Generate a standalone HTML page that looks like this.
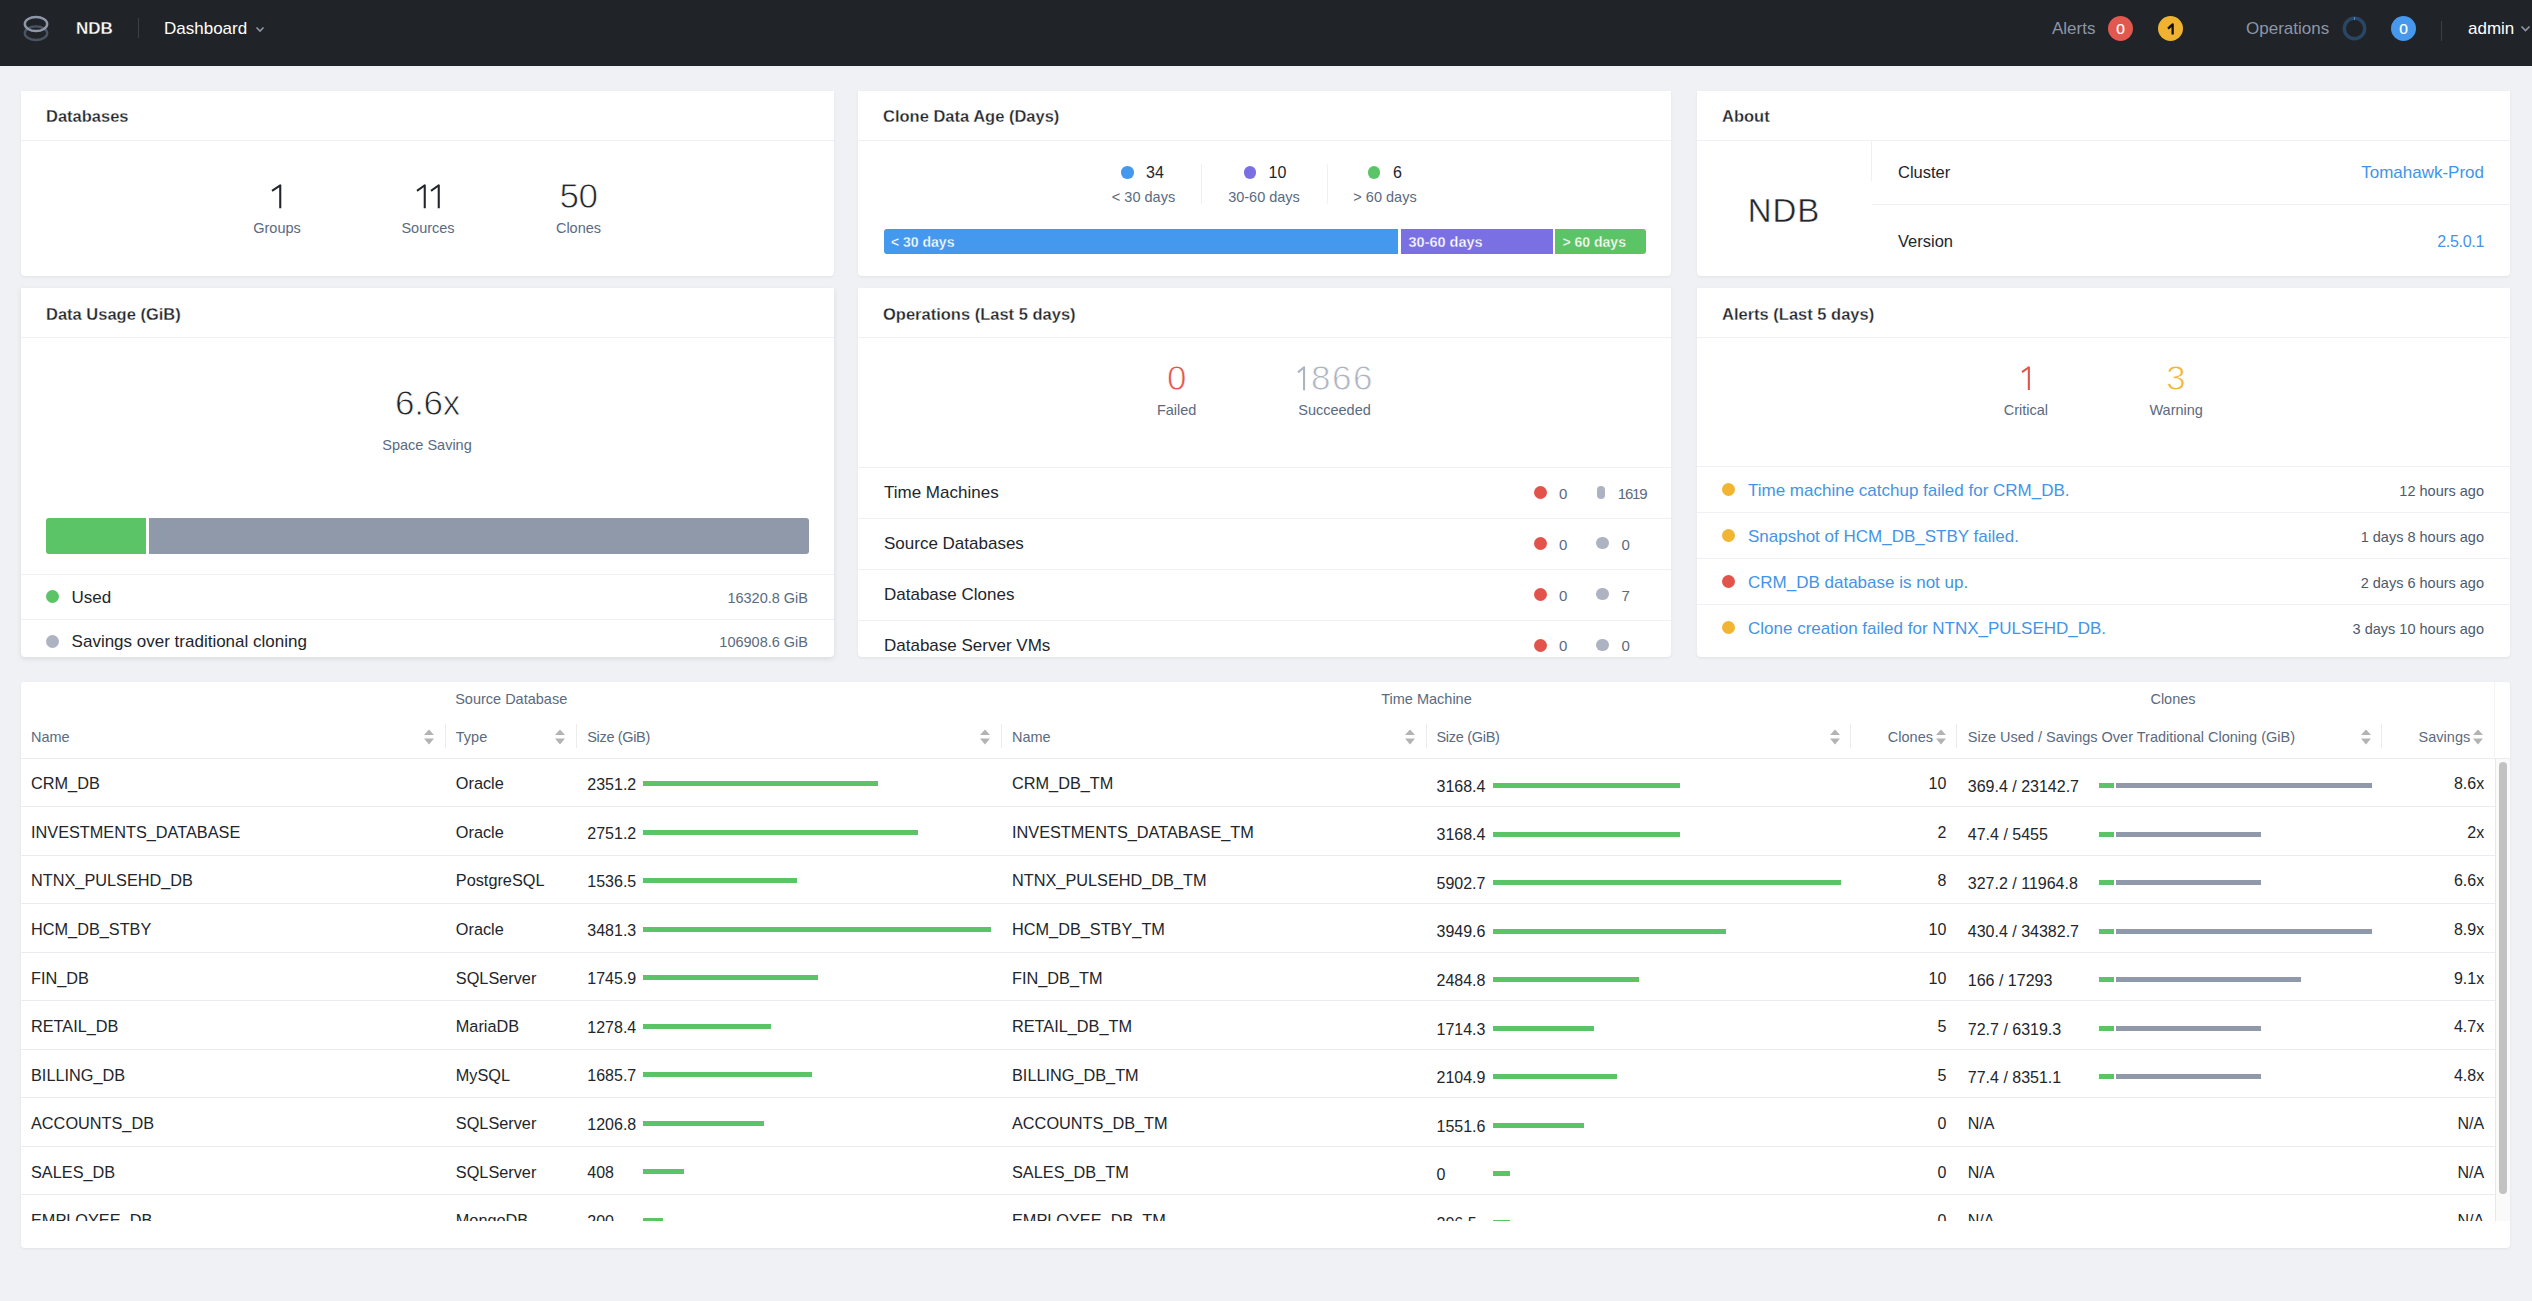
<!DOCTYPE html>
<html><head><meta charset="utf-8"><title>NDB Dashboard</title>
<style>
html,body{margin:0;padding:0;}
body{width:2532px;height:1301px;overflow:hidden;position:relative;background:#f0f1f4;font-family:"Liberation Sans",sans-serif;}
.t{position:absolute;white-space:nowrap;line-height:0;}
.r{position:absolute;}
.card{position:absolute;background:#ffffff;border-radius:0 0 4px 4px;box-shadow:0 1px 3px rgba(30,40,60,0.07);}
.clip{position:absolute;overflow:hidden;}
</style></head><body>
<div class="r" style="left:0px;top:0px;width:2532px;height:66px;background:#202328;"></div>
<svg class="r" style="left:18px;top:10px" width="40" height="38" viewBox="0 0 40 38">
<ellipse cx="18" cy="23.2" rx="11.2" ry="6.8" fill="none" stroke="#4a5361" stroke-width="2.4"/>
<ellipse cx="18" cy="14" rx="11.2" ry="7" fill="none" stroke="#8f98a8" stroke-width="2.4"/>
</svg>
<div class="t" style="top:29.00px;font-size:17px;color:#ffffff;font-weight:700;left:76.00px;-webkit-text-stroke:0.3px #202328;">NDB</div>
<div class="r" style="left:137.5px;top:18px;width:1.5px;height:20px;background:#3b4048;"></div>
<div class="t" style="top:29.00px;font-size:17px;color:#ffffff;left:164.00px;">Dashboard</div>
<svg class="r" style="left:254px;top:25px" width="12" height="9" viewBox="0 0 12 9"><path d="M2.5 2.5 L6 6 L9.5 2.5" fill="none" stroke="#8f98a8" stroke-width="1.6"/></svg>
<div class="t" style="top:29.00px;font-size:17px;color:#8d96a6;left:2052.00px;">Alerts</div>
<div class="r" style="left:2108.00px;top:16.00px;width:25px;height:25px;background:#e2584e;border-radius:50%;"></div>
<div class="t" style="top:29.00px;font-size:15.5px;color:#ffffff;left:2120.50px;transform:translateX(-50%);-webkit-text-stroke:0.2px #fff;">0</div>
<div class="r" style="left:2158.00px;top:16.00px;width:25px;height:25px;background:#f0b331;border-radius:50%;"></div>
<svg class="r" style="left:2165.60px;top:20.60px" width="9.8" height="14.4"><path d="M2.00 7.60 L6.65 3.38 L6.65 13.40" fill="none" stroke="#111111" stroke-width="2.3" stroke-linejoin="round"/></svg>
<div class="t" style="top:29.00px;font-size:17px;color:#8d96a6;left:2246.00px;">Operations</div>
<svg class="r" style="left:2342px;top:15.5px" width="25" height="25" viewBox="0 0 25 25"><circle cx="12.5" cy="12.5" r="10.2" fill="none" stroke="#2a4665" stroke-width="3.4"/><path d="M12.5 1 L12.5 4" stroke="#4d8fd6" stroke-width="1"/></svg>
<div class="r" style="left:2391.00px;top:16.00px;width:25px;height:25px;background:#4598ec;border-radius:50%;"></div>
<div class="t" style="top:29.00px;font-size:15.5px;color:#ffffff;left:2403.50px;transform:translateX(-50%);-webkit-text-stroke:0.2px #fff;">0</div>
<div class="r" style="left:2441px;top:21px;width:1px;height:20px;background:#3b4048;"></div>
<div class="t" style="top:29.00px;font-size:17px;color:#ffffff;left:2468.00px;">admin</div>
<svg class="r" style="left:2519px;top:24px" width="13" height="9" viewBox="0 0 13 9"><path d="M2.5 2.5 L6.5 6.5 L10.5 2.5" fill="none" stroke="#8f98a8" stroke-width="1.6"/></svg>
<div class="card" style="left:21px;top:91px;width:813px;height:185px;"></div>
<div class="t" style="top:116.00px;font-size:16.5px;color:#22262b;font-weight:700;left:46.00px;-webkit-text-stroke:0.28px #fff;">Databases</div>
<div class="r" style="left:21px;top:140px;width:813px;height:1px;background:#eef0f3;"></div>
<div class="t" style="top:228.00px;font-size:14.5px;color:#5a6a80;left:277.00px;transform:translateX(-50%);">Groups</div>
<div class="t" style="top:228.00px;font-size:14.5px;color:#5a6a80;left:428.00px;transform:translateX(-50%);">Sources</div>
<div class="t" style="top:196.00px;font-size:35px;color:#22262b;left:578.50px;transform:translateX(-50%);letter-spacing:-0.5px;-webkit-text-stroke:0.8px #fff;">50</div>
<div class="t" style="top:228.00px;font-size:14.5px;color:#5a6a80;left:578.50px;transform:translateX(-50%);">Clones</div>
<svg class="r" style="left:270.00px;top:182.00px" width="13.3" height="27.2"><path d="M2.00 8.80 L10.25 3.26 L10.25 26.20" fill="none" stroke="#22262b" stroke-width="2.1" stroke-linejoin="round"/></svg>
<svg class="r" style="left:415.20px;top:182.00px" width="12.8" height="27.2"><path d="M2.00 8.80 L9.75 3.26 L9.75 26.20" fill="none" stroke="#22262b" stroke-width="2.1" stroke-linejoin="round"/></svg>
<svg class="r" style="left:428.50px;top:182.00px" width="12.8" height="27.2"><path d="M2.00 8.80 L9.75 3.26 L9.75 26.20" fill="none" stroke="#22262b" stroke-width="2.1" stroke-linejoin="round"/></svg>
<div class="card" style="left:858px;top:91px;width:813px;height:185px;"></div>
<div class="t" style="top:116.00px;font-size:16.5px;color:#22262b;font-weight:700;left:883.00px;-webkit-text-stroke:0.28px #fff;">Clone Data Age (Days)</div>
<div class="r" style="left:858px;top:140px;width:813px;height:1px;background:#eef0f3;"></div>
<div class="r" style="left:1121.25px;top:166.25px;width:12.5px;height:12.5px;background:#4498ee;border-radius:50%;"></div>
<div class="t" style="top:173.00px;font-size:16px;color:#22262b;left:1146.00px;">34</div>
<div class="t" style="top:197.00px;font-size:14.5px;color:#5a6a80;left:1143.50px;transform:translateX(-50%);">&lt; 30 days</div>
<div class="r" style="left:1243.75px;top:166.25px;width:12.5px;height:12.5px;background:#7a6fe3;border-radius:50%;"></div>
<div class="t" style="top:173.00px;font-size:16px;color:#22262b;left:1268.50px;">10</div>
<div class="t" style="top:197.00px;font-size:14.5px;color:#5a6a80;left:1264.00px;transform:translateX(-50%);">30-60 days</div>
<div class="r" style="left:1367.75px;top:166.25px;width:12.5px;height:12.5px;background:#5bc466;border-radius:50%;"></div>
<div class="t" style="top:173.00px;font-size:16px;color:#22262b;left:1393.00px;">6</div>
<div class="t" style="top:197.00px;font-size:14.5px;color:#5a6a80;left:1385.00px;transform:translateX(-50%);">&gt; 60 days</div>
<div class="r" style="left:1201px;top:164px;width:1px;height:40px;background:#eef0f3;"></div>
<div class="r" style="left:1327px;top:164px;width:1px;height:40px;background:#eef0f3;"></div>
<div class="r" style="left:883.8px;top:229px;width:514.6px;height:25px;background:#4498ee;border-radius:3px 0 0 3px;"></div>
<div class="r" style="left:1400.6px;top:229px;width:152px;height:25px;background:#7a6fe3;"></div>
<div class="r" style="left:1555.3px;top:229px;width:90.9px;height:25px;background:#5bc466;border-radius:0 3px 3px 0;"></div>
<div class="t" style="top:242.00px;font-size:14px;color:#ffffff;font-weight:700;left:891.00px;-webkit-text-stroke:0.3px #4498ee;">&lt; 30 days</div>
<div class="t" style="top:242.00px;font-size:14.5px;color:#ffffff;font-weight:700;left:1408.50px;-webkit-text-stroke:0.3px #7a6fe3;">30-60 days</div>
<div class="t" style="top:242.00px;font-size:14px;color:#ffffff;font-weight:700;left:1562.50px;-webkit-text-stroke:0.3px #5bc466;">&gt; 60 days</div>
<div class="card" style="left:1697px;top:91px;width:813px;height:185px;"></div>
<div class="t" style="top:116.00px;font-size:16.5px;color:#22262b;font-weight:700;left:1722.00px;-webkit-text-stroke:0.28px #fff;">About</div>
<div class="r" style="left:1697px;top:140px;width:813px;height:1px;background:#eef0f3;"></div>
<div class="t" style="top:211.00px;font-size:33px;color:#22262b;left:1784.00px;transform:translateX(-50%);letter-spacing:1px;-webkit-text-stroke:0.45px #fff;">NDB</div>
<div class="r" style="left:1871px;top:141px;width:1px;height:40px;background:#eef0f3;"></div>
<div class="r" style="left:1872px;top:204px;width:638px;height:1px;background:#eef0f3;"></div>
<div class="t" style="top:172.00px;font-size:16.5px;color:#22262b;left:1898.00px;">Cluster</div>
<div class="t" style="top:173.00px;font-size:17px;color:#4394e8;right:48.00px;">Tomahawk-Prod</div>
<div class="t" style="top:241.00px;font-size:16.5px;color:#22262b;left:1898.00px;">Version</div>
<div class="t" style="top:242.00px;font-size:16px;color:#4394e8;right:48.00px;letter-spacing:-0.3px;">2.5.0.1</div>
<div class="card" style="left:21px;top:288px;width:813px;height:369px;box-shadow:0 2px 5px rgba(30,40,60,0.10);"></div>
<div class="t" style="top:314.00px;font-size:16.5px;color:#22262b;font-weight:700;left:46.00px;-webkit-text-stroke:0.28px #fff;">Data Usage (GiB)</div>
<div class="r" style="left:21px;top:337px;width:813px;height:1px;background:#eef0f3;"></div>
<div class="t" style="top:403.00px;font-size:35px;color:#22262b;left:427.50px;transform:translateX(-50%);letter-spacing:-0.3px;-webkit-text-stroke:0.8px #fff;">6.6x</div>
<div class="t" style="top:445.00px;font-size:14.5px;color:#5a6a80;left:427.00px;transform:translateX(-50%);">Space Saving</div>
<div class="r" style="left:46px;top:518px;width:100px;height:36px;background:#5bc466;border-radius:3px 0 0 3px;"></div>
<div class="r" style="left:149px;top:518px;width:660px;height:36px;background:#8f99aa;border-radius:0 3px 3px 0;"></div>
<div class="r" style="left:21px;top:574px;width:813px;height:1px;background:#eef0f3;"></div>
<div class="r" style="left:46.00px;top:589.80px;width:13px;height:13px;background:#5bc466;border-radius:50%;"></div>
<div class="t" style="top:598.00px;font-size:17px;color:#22262b;left:71.60px;">Used</div>
<div class="t" style="top:598.00px;font-size:14.5px;color:#5a6a80;right:1724.00px;">16320.8 GiB</div>
<div class="r" style="left:21px;top:619px;width:813px;height:1px;background:#eef0f3;"></div>
<div class="r" style="left:46.00px;top:634.50px;width:13px;height:13px;background:#adb3c0;border-radius:50%;"></div>
<div class="t" style="top:642.00px;font-size:17px;color:#22262b;left:71.60px;">Savings over traditional cloning</div>
<div class="t" style="top:642.00px;font-size:14.5px;color:#5a6a80;right:1724.00px;">106908.6 GiB</div>
<div class="card" style="left:858px;top:288px;width:813px;height:369px;"></div>
<div class="t" style="top:314.00px;font-size:16.5px;color:#22262b;font-weight:700;left:883.00px;-webkit-text-stroke:0.28px #fff;">Operations (Last 5 days)</div>
<div class="r" style="left:858px;top:337px;width:813px;height:1px;background:#eef0f3;"></div>
<div class="t" style="top:378.00px;font-size:35px;color:#e2544b;left:1176.70px;transform:translateX(-50%);-webkit-text-stroke:0.8px #fff;">0</div>
<svg class="r" style="left:1296.30px;top:364.00px" width="11.1" height="27.3"><path d="M2.00 8.40 L8.05 3.26 L8.05 26.30" fill="none" stroke="#acb4c1" stroke-width="2.1" stroke-linejoin="round"/></svg>
<div class="t" style="top:378.00px;font-size:35px;color:#acb4c1;left:1311.00px;letter-spacing:1.5px;-webkit-text-stroke:0.8px #fff;">866</div>
<div class="t" style="top:410.00px;font-size:14.5px;color:#5a6a80;left:1176.70px;transform:translateX(-50%);">Failed</div>
<div class="t" style="top:410.00px;font-size:14.5px;color:#5a6a80;left:1334.50px;transform:translateX(-50%);">Succeeded</div>
<div class="r" style="left:858px;top:467px;width:813px;height:1px;background:#eef0f3;"></div>
<div class="t" style="top:493.00px;font-size:17px;color:#22262b;left:884.00px;">Time Machines</div>
<div class="r" style="left:1533.50px;top:485.50px;width:13px;height:13px;background:#e2544b;border-radius:50%;"></div>
<div class="t" style="top:494.00px;font-size:15px;color:#5a6a80;left:1559.00px;">0</div>
<div class="r" style="left:1596.5px;top:485.5px;width:8.5px;height:13px;background:#adb3c0;border-radius:4.5px;"></div>
<div class="t" style="top:494.00px;font-size:15px;color:#5a6a80;left:1617.80px;letter-spacing:-1.2px;">1619</div>
<div class="r" style="left:858px;top:518px;width:813px;height:1px;background:#eef0f3;"></div>
<div class="t" style="top:544.00px;font-size:17px;color:#22262b;left:884.00px;">Source Databases</div>
<div class="r" style="left:1533.50px;top:536.50px;width:13px;height:13px;background:#e2544b;border-radius:50%;"></div>
<div class="t" style="top:545.00px;font-size:15px;color:#5a6a80;left:1559.00px;">0</div>
<div class="r" style="left:1596.25px;top:536.75px;width:12.5px;height:12.5px;background:#adb3c0;border-radius:50%;"></div>
<div class="t" style="top:545.00px;font-size:15px;color:#5a6a80;left:1621.40px;">0</div>
<div class="r" style="left:858px;top:569px;width:813px;height:1px;background:#eef0f3;"></div>
<div class="t" style="top:595.00px;font-size:17px;color:#22262b;left:884.00px;">Database Clones</div>
<div class="r" style="left:1533.50px;top:587.50px;width:13px;height:13px;background:#e2544b;border-radius:50%;"></div>
<div class="t" style="top:596.00px;font-size:15px;color:#5a6a80;left:1559.00px;">0</div>
<div class="r" style="left:1596.25px;top:587.75px;width:12.5px;height:12.5px;background:#adb3c0;border-radius:50%;"></div>
<div class="t" style="top:596.00px;font-size:15px;color:#5a6a80;left:1621.40px;">7</div>
<div class="r" style="left:858px;top:620px;width:813px;height:1px;background:#eef0f3;"></div>
<div class="t" style="top:646.00px;font-size:17px;color:#22262b;left:884.00px;">Database Server VMs</div>
<div class="r" style="left:1533.50px;top:638.50px;width:13px;height:13px;background:#e2544b;border-radius:50%;"></div>
<div class="t" style="top:646.00px;font-size:15px;color:#5a6a80;left:1559.00px;">0</div>
<div class="r" style="left:1596.25px;top:638.75px;width:12.5px;height:12.5px;background:#adb3c0;border-radius:50%;"></div>
<div class="t" style="top:646.00px;font-size:15px;color:#5a6a80;left:1621.40px;">0</div>
<div class="card" style="left:1697px;top:288px;width:813px;height:369px;"></div>
<div class="t" style="top:314.00px;font-size:16.5px;color:#22262b;font-weight:700;left:1722.00px;-webkit-text-stroke:0.28px #fff;">Alerts (Last 5 days)</div>
<div class="r" style="left:1697px;top:337px;width:813px;height:1px;background:#eef0f3;"></div>
<svg class="r" style="left:2019.50px;top:364.00px" width="11.9" height="27.0"><path d="M2.00 8.20 L8.85 3.26 L8.85 26.00" fill="none" stroke="#e2544b" stroke-width="2.1" stroke-linejoin="round"/></svg>
<div class="t" style="top:378.00px;font-size:35px;color:#f2b531;left:2176.00px;transform:translateX(-50%);-webkit-text-stroke:0.8px #fff;">3</div>
<div class="t" style="top:410.00px;font-size:14.5px;color:#5a6a80;left:2025.90px;transform:translateX(-50%);">Critical</div>
<div class="t" style="top:410.00px;font-size:14.5px;color:#5a6a80;left:2176.20px;transform:translateX(-50%);">Warning</div>
<div class="r" style="left:1697px;top:466px;width:813px;height:1px;background:#eef0f3;"></div>
<div class="r" style="left:1722.20px;top:483.00px;width:13px;height:13px;background:#f2b531;border-radius:50%;"></div>
<div class="t" style="top:491.00px;font-size:17px;color:#4394e8;left:1748.00px;">Time machine catchup failed for CRM_DB.</div>
<div class="t" style="top:491.00px;font-size:14.5px;color:#4e5a6c;right:48.00px;">12 hours ago</div>
<div class="r" style="left:1697px;top:512px;width:813px;height:1px;background:#eef0f3;"></div>
<div class="r" style="left:1722.20px;top:529.00px;width:13px;height:13px;background:#f2b531;border-radius:50%;"></div>
<div class="t" style="top:537.00px;font-size:17px;color:#4394e8;left:1748.00px;">Snapshot of HCM_DB_STBY failed.</div>
<div class="t" style="top:537.00px;font-size:14.5px;color:#4e5a6c;right:48.00px;">1 days 8 hours ago</div>
<div class="r" style="left:1697px;top:558px;width:813px;height:1px;background:#eef0f3;"></div>
<div class="r" style="left:1722.20px;top:575.00px;width:13px;height:13px;background:#e2544b;border-radius:50%;"></div>
<div class="t" style="top:583.00px;font-size:17px;color:#4394e8;left:1748.00px;">CRM_DB database is not up.</div>
<div class="t" style="top:583.00px;font-size:14.5px;color:#4e5a6c;right:48.00px;">2 days 6 hours ago</div>
<div class="r" style="left:1697px;top:604px;width:813px;height:1px;background:#eef0f3;"></div>
<div class="r" style="left:1722.20px;top:621.00px;width:13px;height:13px;background:#f2b531;border-radius:50%;"></div>
<div class="t" style="top:629.00px;font-size:17px;color:#4394e8;left:1748.00px;">Clone creation failed for NTNX_PULSEHD_DB.</div>
<div class="t" style="top:629.00px;font-size:14.5px;color:#4e5a6c;right:48.00px;">3 days 10 hours ago</div>
<div class="card" style="left:21px;top:682px;width:2489px;height:566px;border-radius:3px 3px 4px 4px;"></div>
<div class="t" style="top:699.00px;font-size:14.5px;color:#5a6a80;left:511.20px;transform:translateX(-50%);">Source Database</div>
<div class="t" style="top:699.00px;font-size:14.5px;color:#5a6a80;left:1426.50px;transform:translateX(-50%);">Time Machine</div>
<div class="t" style="top:699.00px;font-size:14.5px;color:#5a6a80;left:2173.00px;transform:translateX(-50%);">Clones</div>
<div class="r" style="left:445.1px;top:724px;width:1px;height:24px;background:#ececec;"></div>
<div class="r" style="left:575.6px;top:724px;width:1px;height:24px;background:#ececec;"></div>
<div class="r" style="left:1001.0px;top:724px;width:1px;height:24px;background:#ececec;"></div>
<div class="r" style="left:1425.6px;top:724px;width:1px;height:24px;background:#ececec;"></div>
<div class="r" style="left:1850.1px;top:724px;width:1px;height:24px;background:#ececec;"></div>
<div class="r" style="left:1956.2px;top:724px;width:1px;height:24px;background:#ececec;"></div>
<div class="r" style="left:2381.0px;top:724px;width:1px;height:24px;background:#ececec;"></div>
<div class="t" style="top:737.00px;font-size:14.5px;color:#5a6a80;left:31.00px;">Name</div>
<svg class="r" style="left:424.0px;top:728.5px" width="10" height="16" viewBox="0 0 10 16"><path d="M5 0.5 L10 6 L0 6 Z M0 9.5 L10 9.5 L5 15.5 Z" fill="#b3b3b3"/></svg>
<div class="t" style="top:737.00px;font-size:14.5px;color:#5a6a80;left:455.80px;">Type</div>
<svg class="r" style="left:554.8px;top:728.5px" width="10" height="16" viewBox="0 0 10 16"><path d="M5 0.5 L10 6 L0 6 Z M0 9.5 L10 9.5 L5 15.5 Z" fill="#b3b3b3"/></svg>
<div class="t" style="top:737.00px;font-size:14.5px;color:#5a6a80;left:587.30px;letter-spacing:-0.35px;">Size (GiB)</div>
<svg class="r" style="left:980.0px;top:728.5px" width="10" height="16" viewBox="0 0 10 16"><path d="M5 0.5 L10 6 L0 6 Z M0 9.5 L10 9.5 L5 15.5 Z" fill="#b3b3b3"/></svg>
<div class="t" style="top:737.00px;font-size:14.5px;color:#5a6a80;left:1012.00px;">Name</div>
<svg class="r" style="left:1405.3px;top:728.5px" width="10" height="16" viewBox="0 0 10 16"><path d="M5 0.5 L10 6 L0 6 Z M0 9.5 L10 9.5 L5 15.5 Z" fill="#b3b3b3"/></svg>
<div class="t" style="top:737.00px;font-size:14.5px;color:#5a6a80;left:1436.50px;letter-spacing:-0.3px;">Size (GiB)</div>
<svg class="r" style="left:1829.5px;top:728.5px" width="10" height="16" viewBox="0 0 10 16"><path d="M5 0.5 L10 6 L0 6 Z M0 9.5 L10 9.5 L5 15.5 Z" fill="#b3b3b3"/></svg>
<div class="t" style="top:737.00px;font-size:14.5px;color:#5a6a80;right:599.00px;">Clones</div>
<svg class="r" style="left:1936.2px;top:728.5px" width="10" height="16" viewBox="0 0 10 16"><path d="M5 0.5 L10 6 L0 6 Z M0 9.5 L10 9.5 L5 15.5 Z" fill="#b3b3b3"/></svg>
<div class="t" style="top:737.00px;font-size:14.5px;color:#5a6a80;left:1967.80px;">Size Used / Savings Over Traditional Cloning (GiB)</div>
<svg class="r" style="left:2360.7px;top:728.5px" width="10" height="16" viewBox="0 0 10 16"><path d="M5 0.5 L10 6 L0 6 Z M0 9.5 L10 9.5 L5 15.5 Z" fill="#b3b3b3"/></svg>
<div class="t" style="top:737.00px;font-size:14.5px;color:#5a6a80;right:61.80px;">Savings</div>
<svg class="r" style="left:2473.2px;top:728.5px" width="10" height="16" viewBox="0 0 10 16"><path d="M5 0.5 L10 6 L0 6 Z M0 9.5 L10 9.5 L5 15.5 Z" fill="#b3b3b3"/></svg>
<div class="r" style="left:21px;top:758px;width:2489px;height:1px;background:#eaecef;"></div>
<div class="r" style="left:2494px;top:682px;width:1px;height:76px;background:#f3f3f3;"></div>
<div class="clip" style="left:21px;top:759px;width:2474px;height:462px;">
<div class="t" style="top:24.00px;font-size:16.3px;color:#22262b;left:10.00px;">CRM_DB</div>
<div class="t" style="top:24.00px;font-size:16.3px;color:#22262b;left:434.80px;">Oracle</div>
<div class="t" style="top:26.00px;font-size:16px;color:#22262b;left:566.30px;">2351.2</div>
<div class="r" style="left:622.00px;top:22.00px;width:235px;height:5px;background:#5bc466;"></div>
<div class="t" style="top:24.00px;font-size:16.3px;color:#22262b;left:991.00px;">CRM_DB_TM</div>
<div class="t" style="top:28.00px;font-size:16px;color:#22262b;left:1415.50px;">3168.4</div>
<div class="r" style="left:1472.00px;top:24.00px;width:187px;height:5px;background:#5bc466;"></div>
<div class="t" style="top:25.00px;font-size:16px;color:#22262b;right:548.70px;">10</div>
<div class="t" style="top:28.00px;font-size:16px;color:#22262b;left:1946.80px;">369.4 / 23142.7</div>
<div class="r" style="left:2078.00px;top:24.00px;width:15px;height:5px;background:#5bc466;"></div>
<div class="r" style="left:2095.00px;top:24.00px;width:256px;height:5px;background:#8f99aa;"></div>
<div class="t" style="top:25.00px;font-size:16px;color:#22262b;right:10.80px;">8.6x</div>
<div class="r" style="left:0.00px;top:47.00px;width:2474px;height:1px;background:#eaecef;"></div>
<div class="t" style="top:73.00px;font-size:16.3px;color:#22262b;left:10.00px;">INVESTMENTS_DATABASE</div>
<div class="t" style="top:73.00px;font-size:16.3px;color:#22262b;left:434.80px;">Oracle</div>
<div class="t" style="top:75.00px;font-size:16px;color:#22262b;left:566.30px;">2751.2</div>
<div class="r" style="left:622.00px;top:70.53px;width:275px;height:5px;background:#5bc466;"></div>
<div class="t" style="top:73.00px;font-size:16.3px;color:#22262b;left:991.00px;">INVESTMENTS_DATABASE_TM</div>
<div class="t" style="top:76.00px;font-size:16px;color:#22262b;left:1415.50px;">3168.4</div>
<div class="r" style="left:1472.00px;top:72.53px;width:187px;height:5px;background:#5bc466;"></div>
<div class="t" style="top:74.00px;font-size:16px;color:#22262b;right:548.70px;">2</div>
<div class="t" style="top:76.00px;font-size:16px;color:#22262b;left:1946.80px;">47.4 / 5455</div>
<div class="r" style="left:2078.00px;top:72.53px;width:15px;height:5px;background:#5bc466;"></div>
<div class="r" style="left:2095.00px;top:72.53px;width:145px;height:5px;background:#8f99aa;"></div>
<div class="t" style="top:74.00px;font-size:16px;color:#22262b;right:10.80px;">2x</div>
<div class="r" style="left:0.00px;top:95.53px;width:2474px;height:1px;background:#eaecef;"></div>
<div class="t" style="top:121.00px;font-size:16.3px;color:#22262b;left:10.00px;">NTNX_PULSEHD_DB</div>
<div class="t" style="top:121.00px;font-size:16.3px;color:#22262b;left:434.80px;">PostgreSQL</div>
<div class="t" style="top:123.00px;font-size:16px;color:#22262b;left:566.30px;">1536.5</div>
<div class="r" style="left:622.00px;top:119.06px;width:154px;height:5px;background:#5bc466;"></div>
<div class="t" style="top:121.00px;font-size:16.3px;color:#22262b;left:991.00px;">NTNX_PULSEHD_DB_TM</div>
<div class="t" style="top:125.00px;font-size:16px;color:#22262b;left:1415.50px;">5902.7</div>
<div class="r" style="left:1472.00px;top:121.06px;width:348px;height:5px;background:#5bc466;"></div>
<div class="t" style="top:122.00px;font-size:16px;color:#22262b;right:548.70px;">8</div>
<div class="t" style="top:125.00px;font-size:16px;color:#22262b;left:1946.80px;">327.2 / 11964.8</div>
<div class="r" style="left:2078.00px;top:121.06px;width:15px;height:5px;background:#5bc466;"></div>
<div class="r" style="left:2095.00px;top:121.06px;width:145px;height:5px;background:#8f99aa;"></div>
<div class="t" style="top:122.00px;font-size:16px;color:#22262b;right:10.80px;">6.6x</div>
<div class="r" style="left:0.00px;top:144.06px;width:2474px;height:1px;background:#eaecef;"></div>
<div class="t" style="top:170.00px;font-size:16.3px;color:#22262b;left:10.00px;">HCM_DB_STBY</div>
<div class="t" style="top:170.00px;font-size:16.3px;color:#22262b;left:434.80px;">Oracle</div>
<div class="t" style="top:172.00px;font-size:16px;color:#22262b;left:566.30px;">3481.3</div>
<div class="r" style="left:622.00px;top:167.59px;width:348px;height:5px;background:#5bc466;"></div>
<div class="t" style="top:170.00px;font-size:16.3px;color:#22262b;left:991.00px;">HCM_DB_STBY_TM</div>
<div class="t" style="top:173.00px;font-size:16px;color:#22262b;left:1415.50px;">3949.6</div>
<div class="r" style="left:1472.00px;top:169.59px;width:233px;height:5px;background:#5bc466;"></div>
<div class="t" style="top:171.00px;font-size:16px;color:#22262b;right:548.70px;">10</div>
<div class="t" style="top:173.00px;font-size:16px;color:#22262b;left:1946.80px;">430.4 / 34382.7</div>
<div class="r" style="left:2078.00px;top:169.59px;width:15px;height:5px;background:#5bc466;"></div>
<div class="r" style="left:2095.00px;top:169.59px;width:256px;height:5px;background:#8f99aa;"></div>
<div class="t" style="top:171.00px;font-size:16px;color:#22262b;right:10.80px;">8.9x</div>
<div class="r" style="left:0.00px;top:192.59px;width:2474px;height:1px;background:#eaecef;"></div>
<div class="t" style="top:219.00px;font-size:16.3px;color:#22262b;left:10.00px;">FIN_DB</div>
<div class="t" style="top:219.00px;font-size:16.3px;color:#22262b;left:434.80px;">SQLServer</div>
<div class="t" style="top:220.00px;font-size:16px;color:#22262b;left:566.30px;">1745.9</div>
<div class="r" style="left:622.00px;top:216.12px;width:175px;height:5px;background:#5bc466;"></div>
<div class="t" style="top:219.00px;font-size:16.3px;color:#22262b;left:991.00px;">FIN_DB_TM</div>
<div class="t" style="top:222.00px;font-size:16px;color:#22262b;left:1415.50px;">2484.8</div>
<div class="r" style="left:1472.00px;top:218.12px;width:146px;height:5px;background:#5bc466;"></div>
<div class="t" style="top:220.00px;font-size:16px;color:#22262b;right:548.70px;">10</div>
<div class="t" style="top:222.00px;font-size:16px;color:#22262b;left:1946.80px;">166 / 17293</div>
<div class="r" style="left:2078.00px;top:218.12px;width:15px;height:5px;background:#5bc466;"></div>
<div class="r" style="left:2095.00px;top:218.12px;width:185px;height:5px;background:#8f99aa;"></div>
<div class="t" style="top:220.00px;font-size:16px;color:#22262b;right:10.80px;">9.1x</div>
<div class="r" style="left:0.00px;top:241.12px;width:2474px;height:1px;background:#eaecef;"></div>
<div class="t" style="top:267.00px;font-size:16.3px;color:#22262b;left:10.00px;">RETAIL_DB</div>
<div class="t" style="top:267.00px;font-size:16.3px;color:#22262b;left:434.80px;">MariaDB</div>
<div class="t" style="top:269.00px;font-size:16px;color:#22262b;left:566.30px;">1278.4</div>
<div class="r" style="left:622.00px;top:264.65px;width:128px;height:5px;background:#5bc466;"></div>
<div class="t" style="top:267.00px;font-size:16.3px;color:#22262b;left:991.00px;">RETAIL_DB_TM</div>
<div class="t" style="top:271.00px;font-size:16px;color:#22262b;left:1415.50px;">1714.3</div>
<div class="r" style="left:1472.00px;top:266.65px;width:101px;height:5px;background:#5bc466;"></div>
<div class="t" style="top:268.00px;font-size:16px;color:#22262b;right:548.70px;">5</div>
<div class="t" style="top:271.00px;font-size:16px;color:#22262b;left:1946.80px;">72.7 / 6319.3</div>
<div class="r" style="left:2078.00px;top:266.65px;width:15px;height:5px;background:#5bc466;"></div>
<div class="r" style="left:2095.00px;top:266.65px;width:145px;height:5px;background:#8f99aa;"></div>
<div class="t" style="top:268.00px;font-size:16px;color:#22262b;right:10.80px;">4.7x</div>
<div class="r" style="left:0.00px;top:289.65px;width:2474px;height:1px;background:#eaecef;"></div>
<div class="t" style="top:316.00px;font-size:16.3px;color:#22262b;left:10.00px;">BILLING_DB</div>
<div class="t" style="top:316.00px;font-size:16.3px;color:#22262b;left:434.80px;">MySQL</div>
<div class="t" style="top:317.00px;font-size:16px;color:#22262b;left:566.30px;">1685.7</div>
<div class="r" style="left:622.00px;top:313.18px;width:169px;height:5px;background:#5bc466;"></div>
<div class="t" style="top:316.00px;font-size:16.3px;color:#22262b;left:991.00px;">BILLING_DB_TM</div>
<div class="t" style="top:319.00px;font-size:16px;color:#22262b;left:1415.50px;">2104.9</div>
<div class="r" style="left:1472.00px;top:315.18px;width:124px;height:5px;background:#5bc466;"></div>
<div class="t" style="top:317.00px;font-size:16px;color:#22262b;right:548.70px;">5</div>
<div class="t" style="top:319.00px;font-size:16px;color:#22262b;left:1946.80px;">77.4 / 8351.1</div>
<div class="r" style="left:2078.00px;top:315.18px;width:15px;height:5px;background:#5bc466;"></div>
<div class="r" style="left:2095.00px;top:315.18px;width:145px;height:5px;background:#8f99aa;"></div>
<div class="t" style="top:317.00px;font-size:16px;color:#22262b;right:10.80px;">4.8x</div>
<div class="r" style="left:0.00px;top:338.18px;width:2474px;height:1px;background:#eaecef;"></div>
<div class="t" style="top:364.00px;font-size:16.3px;color:#22262b;left:10.00px;">ACCOUNTS_DB</div>
<div class="t" style="top:364.00px;font-size:16.3px;color:#22262b;left:434.80px;">SQLServer</div>
<div class="t" style="top:366.00px;font-size:16px;color:#22262b;left:566.30px;">1206.8</div>
<div class="r" style="left:622.00px;top:361.71px;width:121px;height:5px;background:#5bc466;"></div>
<div class="t" style="top:364.00px;font-size:16.3px;color:#22262b;left:991.00px;">ACCOUNTS_DB_TM</div>
<div class="t" style="top:368.00px;font-size:16px;color:#22262b;left:1415.50px;">1551.6</div>
<div class="r" style="left:1472.00px;top:363.71px;width:91px;height:5px;background:#5bc466;"></div>
<div class="t" style="top:365.00px;font-size:16px;color:#22262b;right:548.70px;">0</div>
<div class="t" style="top:365.00px;font-size:16px;color:#22262b;left:1946.80px;">N/A</div>
<div class="t" style="top:365.00px;font-size:16px;color:#22262b;right:10.80px;">N/A</div>
<div class="r" style="left:0.00px;top:386.71px;width:2474px;height:1px;background:#eaecef;"></div>
<div class="t" style="top:413.00px;font-size:16.3px;color:#22262b;left:10.00px;">SALES_DB</div>
<div class="t" style="top:413.00px;font-size:16.3px;color:#22262b;left:434.80px;">SQLServer</div>
<div class="t" style="top:414.00px;font-size:16px;color:#22262b;left:566.30px;">408</div>
<div class="r" style="left:622.00px;top:410.24px;width:41px;height:5px;background:#5bc466;"></div>
<div class="t" style="top:413.00px;font-size:16.3px;color:#22262b;left:991.00px;">SALES_DB_TM</div>
<div class="t" style="top:416.00px;font-size:16px;color:#22262b;left:1415.50px;">0</div>
<div class="r" style="left:1472.00px;top:412.24px;width:17px;height:5px;background:#5bc466;"></div>
<div class="t" style="top:414.00px;font-size:16px;color:#22262b;right:548.70px;">0</div>
<div class="t" style="top:414.00px;font-size:16px;color:#22262b;left:1946.80px;">N/A</div>
<div class="t" style="top:414.00px;font-size:16px;color:#22262b;right:10.80px;">N/A</div>
<div class="r" style="left:0.00px;top:435.24px;width:2474px;height:1px;background:#eaecef;"></div>
<div class="t" style="top:461.00px;font-size:16.3px;color:#22262b;left:10.00px;">EMPLOYEE_DB</div>
<div class="t" style="top:461.00px;font-size:16.3px;color:#22262b;left:434.80px;">MongoDB</div>
<div class="t" style="top:463.00px;font-size:16px;color:#22262b;left:566.30px;">200</div>
<div class="r" style="left:622.00px;top:458.77px;width:20px;height:5px;background:#5bc466;"></div>
<div class="t" style="top:461.00px;font-size:16.3px;color:#22262b;left:991.00px;">EMPLOYEE_DB_TM</div>
<div class="t" style="top:465.00px;font-size:16px;color:#22262b;left:1415.50px;">206.5</div>
<div class="r" style="left:1472.00px;top:460.77px;width:17px;height:5px;background:#5bc466;"></div>
<div class="t" style="top:462.00px;font-size:16px;color:#22262b;right:548.70px;">0</div>
<div class="t" style="top:462.00px;font-size:16px;color:#22262b;left:1946.80px;">N/A</div>
<div class="t" style="top:462.00px;font-size:16px;color:#22262b;right:10.80px;">N/A</div>
<div class="r" style="left:0.00px;top:483.77px;width:2474px;height:1px;background:#eaecef;"></div>
</div>
<div class="r" style="left:2495px;top:759px;width:15px;height:462px;background:#fafafa;border-left:1px solid #e8e8e8;box-sizing:border-box;"></div>
<div class="r" style="left:2499px;top:762px;width:8px;height:432px;background:#c2c2c2;border-radius:4px;"></div>
</body></html>
